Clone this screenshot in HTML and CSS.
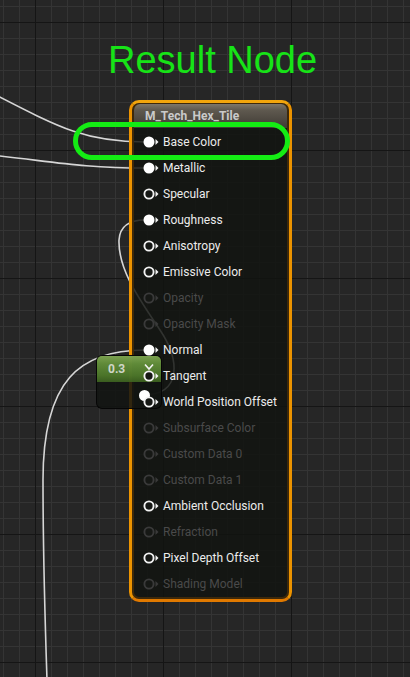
FILE: index.html
```html
<!DOCTYPE html>
<html>
<head>
<meta charset="utf-8">
<link rel="stylesheet" href="styles.css">
</head>
<body>
<div class="canvas">
  <svg class="wires" width="410" height="677" viewBox="0 0 410 677">
    <path d="M -10 92 C 60 128, 85 142, 145 142"/>
    <path d="M -10 155 C 50 161, 80 168, 145 168"/>
    <path d="M 143 395 C 182 395, 180 360, 160 330 C 140 300, 118 270, 119 240 C 120 225, 130 220, 145 220"/>
    <path d="M 145 350 C 80 350, 43 380, 43 480 C 43 560, 45 620, 47 680"/>
  </svg>

  <div class="annotation">Result Node</div>

  <div class="node main">
    <div class="node-title">M_Tech_Hex_Tile</div>
    <ul class="pins">
      <li class="pin filled"><svg viewBox="0 0 16 14"><circle cx="6" cy="7" r="5.5"/><polygon points="12.5,4 15.5,7 12.5,10"/></svg>Base Color</li>
      <li class="pin filled"><svg viewBox="0 0 16 14"><circle cx="6" cy="7" r="5.5"/><polygon points="12.5,4 15.5,7 12.5,10"/></svg>Metallic</li>
      <li class="pin open"><svg viewBox="0 0 16 14"><circle cx="6" cy="7" r="4.6"/><polygon points="12.5,4 15.5,7 12.5,10"/></svg>Specular</li>
      <li class="pin filled"><svg viewBox="0 0 16 14"><circle cx="6" cy="7" r="5.5"/><polygon points="12.5,4 15.5,7 12.5,10"/></svg>Roughness</li>
      <li class="pin open"><svg viewBox="0 0 16 14"><circle cx="6" cy="7" r="4.6"/><polygon points="12.5,4 15.5,7 12.5,10"/></svg>Anisotropy</li>
      <li class="pin open"><svg viewBox="0 0 16 14"><circle cx="6" cy="7" r="4.6"/><polygon points="12.5,4 15.5,7 12.5,10"/></svg>Emissive Color</li>
      <li class="pin off"><svg viewBox="0 0 16 14"><circle cx="6" cy="7" r="4.6"/><polygon points="12.5,4 15.5,7 12.5,10"/></svg>Opacity</li>
      <li class="pin off"><svg viewBox="0 0 16 14"><circle cx="6" cy="7" r="4.6"/><polygon points="12.5,4 15.5,7 12.5,10"/></svg>Opacity Mask</li>
      <li class="pin filled"><svg viewBox="0 0 16 14"><circle cx="6" cy="7" r="5.5"/><polygon points="12.5,4 15.5,7 12.5,10"/></svg>Normal</li>
      <li class="pin open"><svg viewBox="0 0 16 14"><circle cx="6" cy="7" r="4.6"/><polygon points="12.5,4 15.5,7 12.5,10"/></svg>Tangent</li>
      <li class="pin open"><svg viewBox="0 0 16 14"><circle cx="6" cy="7" r="4.6"/><polygon points="12.5,4 15.5,7 12.5,10"/></svg>World Position Offset</li>
      <li class="pin off"><svg viewBox="0 0 16 14"><circle cx="6" cy="7" r="4.6"/><polygon points="12.5,4 15.5,7 12.5,10"/></svg>Subsurface Color</li>
      <li class="pin off"><svg viewBox="0 0 16 14"><circle cx="6" cy="7" r="4.6"/><polygon points="12.5,4 15.5,7 12.5,10"/></svg>Custom Data 0</li>
      <li class="pin off"><svg viewBox="0 0 16 14"><circle cx="6" cy="7" r="4.6"/><polygon points="12.5,4 15.5,7 12.5,10"/></svg>Custom Data 1</li>
      <li class="pin open"><svg viewBox="0 0 16 14"><circle cx="6" cy="7" r="4.6"/><polygon points="12.5,4 15.5,7 12.5,10"/></svg>Ambient Occlusion</li>
      <li class="pin off"><svg viewBox="0 0 16 14"><circle cx="6" cy="7" r="4.6"/><polygon points="12.5,4 15.5,7 12.5,10"/></svg>Refraction</li>
      <li class="pin open"><svg viewBox="0 0 16 14"><circle cx="6" cy="7" r="4.6"/><polygon points="12.5,4 15.5,7 12.5,10"/></svg>Pixel Depth Offset</li>
      <li class="pin off"><svg viewBox="0 0 16 14"><circle cx="6" cy="7" r="4.6"/><polygon points="12.5,4 15.5,7 12.5,10"/></svg>Shading Model</li>
    </ul>
  </div>

  <div class="node const">
    <div class="const-head">
      <span class="const-value">0.3</span>
      <svg class="chevron" viewBox="0 0 10 8"><polyline points="1,1.5 5,6 9,1.5"/></svg>
    </div>
    <div class="const-body">
      <span class="out-dot"></span>
    </div>
  </div>

  <div class="highlight"></div>
</div>
</body>
</html>
```

FILE: styles.css
```css
html, body {
  margin: 0;
  padding: 0;
}

body {
  width: 410px;
  height: 677px;
  overflow: hidden;
  font-family: Roboto, "Noto Sans", sans-serif;
}

.canvas {
  position: relative;
  width: 410px;
  height: 677px;
  background-color: #262626;
  background-image:
    linear-gradient(to right, #151515 1px, transparent 1px),
    linear-gradient(to bottom, #151515 1px, transparent 1px),
    linear-gradient(to right, #343434 1px, transparent 1px),
    linear-gradient(to bottom, #343434 1px, transparent 1px);
  background-size: 128px 128px, 128px 128px, 16px 16px, 16px 16px;
  background-position: 35px 0, 0 22px, 3px 0, 0 6px;
}

.wires {
  position: absolute;
  left: 0;
  top: 0;
}

.wires path {
  fill: none;
  stroke: #d6d6d6;
  stroke-width: 1.6;
}

.annotation {
  position: absolute;
  left: 108px;
  top: 41px;
  font-family: "Liberation Sans", Arial, sans-serif;
  font-size: 38px;
  line-height: 38px;
  color: #17e317;
  white-space: nowrap;
}

/* main material node */
.main {
  position: absolute;
  left: 129px;
  top: 100px;
  width: 163px;
  height: 502px;
  box-sizing: border-box;
  border: 3px solid #ec9300;
  border-top-color: #f2a50c;
  border-bottom-color: #e07900;
  border-radius: 10px;
  padding: 1px 2px 2px 2px;
  background: rgba(17, 19, 16, 0.84);
  background-clip: padding-box;
  box-shadow: inset 0 0 0 2px rgba(64, 42, 10, 0.95);
}

.node-title {
  height: 24px;
  margin-bottom: 1px;
  box-sizing: border-box;
  padding-left: 11px;
  border-radius: 6px 6px 0 0;
  background: linear-gradient(to bottom, #7d766a 0%, #5f594f 25%, #4c473f 70%, #3e3a34 100%);
  color: #cacaca;
  font-size: 12px;
  font-weight: bold;
  line-height: 24px;
  white-space: nowrap;
}

.pins {
  list-style: none;
  margin: 0;
  padding: 0;
}

.pin {
  position: relative;
  z-index: 2;
  height: 26px;
  display: flex;
  align-items: center;
  gap: 4px;
  padding-left: 9px;
  font-size: 12px;
  color: #ececec;
  white-space: nowrap;
}

.pin svg {
  width: 16px;
  height: 14px;
  flex: none;
}

.pin.filled circle {
  fill: #ffffff;
}

.pin.open circle {
  fill: #161815;
  stroke: #f2f2f2;
  stroke-width: 1.9;
}

.pin.off circle {
  fill: #161815;
  stroke: #3a3a3a;
  stroke-width: 1.9;
}

.pin.filled polygon,
.pin.open polygon {
  fill: #f2f2f2;
}

.pin.off polygon {
  fill: #3a3a3a;
}

.pin.off {
  color: #4a4a4a;
}

/* constant node */
.const {
  position: absolute;
  z-index: 1;
  left: 96px;
  top: 355px;
  width: 66px;
  height: 54px;
  box-sizing: border-box;
  border: 1px solid rgba(6, 6, 6, 0.9);
  border-radius: 6px;
  display: flex;
  flex-direction: column;
  background: rgba(18, 20, 17, 0.86);
}

.const-head {
  height: 26px;
  display: flex;
  align-items: center;
  padding-left: 11px;
  border-radius: 5px 5px 0 0;
  background: linear-gradient(to bottom, rgba(134, 176, 86, 0.9) 0%, rgba(106, 154, 62, 0.88) 30%, rgba(82, 128, 44, 0.88) 75%, rgba(62, 100, 32, 0.9) 100%);
}

.const-value {
  color: #cfd6c8;
  font-size: 12px;
  font-weight: bold;
  width: 36px;
}

.chevron {
  width: 10px;
  height: 8px;
  margin-top: -4px;
}

.chevron polyline {
  fill: none;
  stroke: #f2f2f2;
  stroke-width: 1.6;
}

.const-body {
  position: relative;
  flex: 1;
}

.out-dot {
  position: absolute;
  left: 42px;
  top: 8px;
  width: 11px;
  height: 11px;
  border-radius: 50%;
  background: #ffffff;
}

/* green annotation outline */
.highlight {
  position: absolute;
  z-index: 3;
  left: 73px;
  top: 122px;
  width: 217px;
  height: 38px;
  box-sizing: border-box;
  border: 5px solid #14ec14;
  border-radius: 19px;
}
```
